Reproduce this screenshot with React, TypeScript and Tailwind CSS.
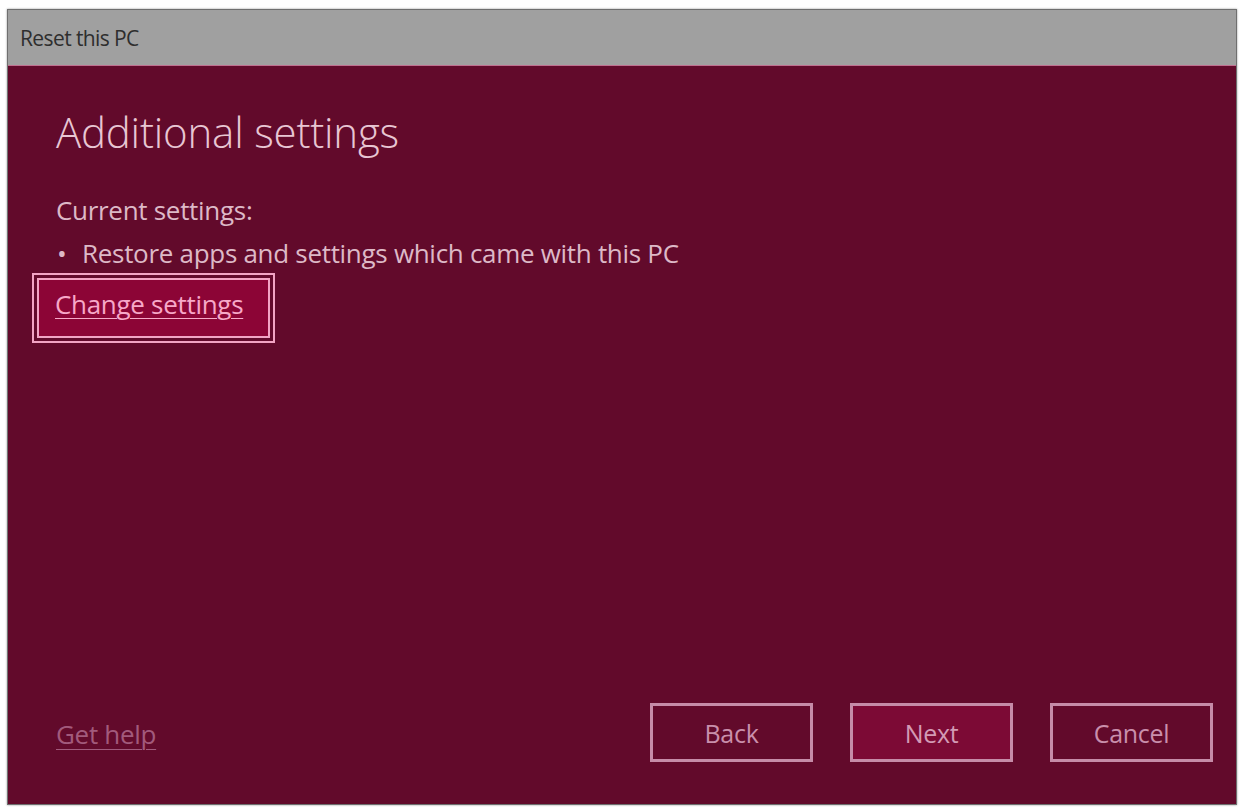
import React from "react";

export default function App() {
  return (
    <div className="w-[1242px] h-[807px] bg-white pt-[9px] pl-[7px] overflow-hidden" style={{ fontFamily: '"Open Sans", "Noto Sans", sans-serif' }}>
      <div className="w-[1230px] h-[796px] flex flex-col border border-[#6f6f6f] shadow-[0_0_2px_rgba(0,0,0,0.4)]">
        <div className="h-[56px] bg-[#a0a0a0] flex items-center pl-[12px] border-b border-[#c07090]">
          <span className="text-[21px] text-[#2e2e2e] tracking-[-0.6px] mt-[2px]">Reset this PC</span>
        </div>
        <div className="flex-1 bg-[#620a2b] flex flex-col pl-[48px] pr-[23px] pb-[42px] relative">
          <h1 className="mt-[45px] text-[42px] font-light text-[#e8c6d3] leading-none tracking-[-0.2px]">Additional settings</h1>
          <p className="mt-[44px] text-[26px] text-[#ddb9c7] leading-none tracking-[-0.3px]">Current settings:</p>
          <div className="mt-[17px] flex items-center text-[26px] text-[#ddb9c7] leading-none tracking-[-0.3px]">
            <span className="w-[26px] pl-[1px]">•</span>
            <span>Restore apps and settings which came with this PC</span>
          </div>
          <div className="mt-[7px] -ml-[24px] w-[243px] h-[70px] border-2 border-[#f2a4c4] p-[3px]">
            <div className="w-full h-full border-2 border-[#f2a4c4] bg-[#8c0536] flex items-center pl-[16px] pb-[8px]">
              <span className="text-[26px] leading-none text-[#f7a8c8] underline underline-offset-[4px] decoration-1 tracking-[-0.3px]">Change settings</span>
            </div>
          </div>
          <div className="flex-1" />
          <div className="flex items-center">
            <span className="text-[26px] leading-none text-[#a25a7c] underline underline-offset-[5px] decoration-1 tracking-[-0.3px] mt-[2px]">Get help</span>
            <div className="flex-1" />
            <div className="flex gap-[37px]">
              <button className="w-[163px] h-[59px] border-[3px] border-[#c68ca8] bg-[#620a2b] text-[25px] tracking-[-0.3px] text-[#c98fab] pt-[2px]">Back</button>
              <button className="w-[163px] h-[59px] border-[3px] border-[#c68ca8] bg-[#7c0a35] text-[25px] tracking-[-0.3px] text-[#d39ab5] pt-[2px]">Next</button>
              <button className="w-[163px] h-[59px] border-[3px] border-[#c68ca8] bg-[#620a2b] text-[25px] tracking-[-0.3px] text-[#c98fab] pt-[2px]">Cancel</button>
            </div>
          </div>
        </div>
      </div>
    </div>
  );
}
